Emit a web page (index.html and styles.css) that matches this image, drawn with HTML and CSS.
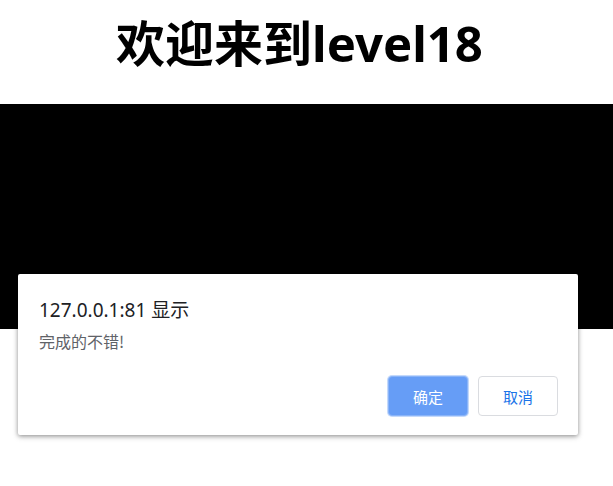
FILE: index.html
```html
<!DOCTYPE html>
<html lang="zh">
<head>
<meta charset="utf-8">
<link rel="stylesheet" href="styles.css">
</head>
<body>
<h1 class="title">欢迎来到level18</h1>
<div class="stage"></div>
<div class="dialog">
  <div class="dialog-title">127.0.0.1:81 显示</div>
  <div class="dialog-msg">完成的不错!</div>
  <div class="dialog-actions">
    <button class="btn btn-ok">确定</button>
    <button class="btn btn-cancel">取消</button>
  </div>
</div>
</body>
</html>
```
FILE: styles.css
```css
html, body {
  margin: 0;
  padding: 0;
  background: #fff;
}
body {
  position: relative;
  width: 613px;
  height: 486px;
  overflow: hidden;
  font-family: "Noto Sans", "Noto Sans CJK SC", sans-serif;
}
.title {
  margin: 0;
  padding: 12px 14px 0 0;
  height: 92px;
  box-sizing: border-box;
  text-align: center;
  font-size: 49px;
  line-height: 62px;
  font-weight: 700;
  color: #000;
  font-family: "Noto Sans", "Noto Sans CJK SC", sans-serif;
}
.stage {
  margin-top: 12px;
  height: 225px;
  background: #000;
}
.dialog {
  position: absolute;
  left: 18px;
  top: 274px;
  width: 560px;
  height: 161px;
  box-sizing: border-box;
  background: #fff;
  border-radius: 2px;
  box-shadow: 0 1px 4px rgba(0,0,0,0.35), 0 2px 6px rgba(0,0,0,0.15);
  padding: 21px 20px 0 21px;
}
.dialog-title {
  font-size: 19px;
  line-height: 30px;
  color: #202124;
  font-family: "Noto Sans", "Noto Sans CJK SC", sans-serif;
}
.dialog-msg {
  margin-top: 6px;
  font-size: 16px;
  line-height: 20px;
  color: #5f6368;
  font-family: "Noto Sans CJK SC", sans-serif;
}
.dialog-actions {
  display: flex;
  justify-content: flex-end;
  gap: 10px;
  margin-top: 25px;
}
.btn {
  width: 80px;
  height: 40px;
  box-sizing: border-box;
  border-radius: 4px;
  font-size: 15px;
  font-family: "Noto Sans CJK SC", sans-serif;
  padding: 0;
}
.btn-ok {
  background: #669df6;
  border: 1px solid #8ab4f8;
  color: #fff;
  box-shadow: 0 0 0 1px rgba(138,180,248,0.5);
}
.btn-cancel {
  background: #fff;
  border: 1px solid #dadce0;
  color: #1a73e8;
}
```
